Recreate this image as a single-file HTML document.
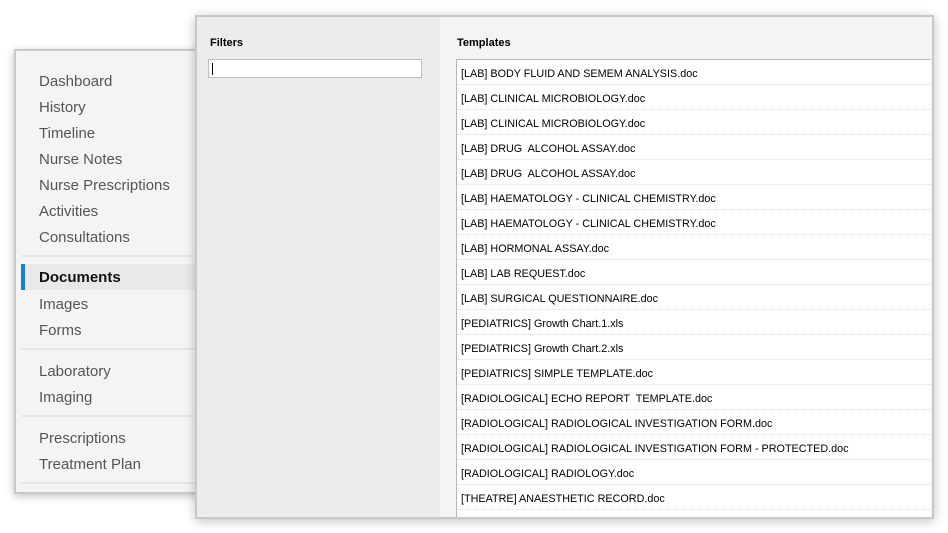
<!DOCTYPE html><html><head><style>
body{margin:0;width:948px;height:533px;background:#fff;position:relative;overflow:hidden;font-family:"Liberation Sans",Arial,sans-serif}
.back{position:absolute;left:14px;top:49px;width:200px;height:441px;background:#f4f4f4;border:2px solid #c9c9c9;box-shadow:0 2px 8px rgba(0,0,0,.25)}
.nav{position:absolute;left:39px;font-size:15px;color:#555;line-height:18px}
.sep{position:absolute;left:21px;width:180px;height:2px;background:#e6e6e6}
.win{position:absolute;left:195px;top:15px;width:735px;height:500px;background:#f4f4f4;border:2px solid #c8c8c8;box-shadow:0 2px 10px rgba(0,0,0,.25);overflow:hidden}
.lp{position:absolute;left:0;top:0;width:243px;height:500px;background:#ececec}
.lbl{position:absolute;font-size:11px;font-weight:bold;color:#000}
.inp{position:absolute;left:11px;top:42px;width:212px;height:17px;background:#fff;border:1px solid #bdbdbd}
.inp:after{content:"";position:absolute;left:3px;top:3px;width:1px;height:12px;background:#000}
.list{position:absolute;left:259px;top:42px;width:474px;height:460px;background:#fff;border:1px solid #b5b5b5;border-right:none;border-bottom:none}
.row{height:24px;border-bottom:1px dotted #ddd;font-size:10.8px;line-height:28px;padding-left:4px;color:#000;white-space:nowrap}
</style></head><body>
<div class="back"></div>
<div class="nav" style="top:73px">Dashboard</div>
<div class="nav" style="top:99px">History</div>
<div class="nav" style="top:125px">Timeline</div>
<div class="nav" style="top:151px">Nurse Notes</div>
<div class="nav" style="top:177px">Nurse Prescriptions</div>
<div class="nav" style="top:203px">Activities</div>
<div class="nav" style="top:229px">Consultations</div>
<div class="sep" style="top:255px"></div>
<div style="position:absolute;left:21px;top:264px;width:180px;height:26px;background:#e9e9e9"></div>
<div style="position:absolute;left:21px;top:264px;width:4px;height:26px;background:#1a7fd4"></div>
<div class="nav" style="top:269px;font-weight:bold;color:#111">Documents</div>
<div class="nav" style="top:296px">Images</div>
<div class="nav" style="top:322px">Forms</div>
<div class="sep" style="top:348px"></div>
<div class="nav" style="top:363px">Laboratory</div>
<div class="nav" style="top:389px">Imaging</div>
<div class="sep" style="top:415px"></div>
<div class="nav" style="top:430px">Prescriptions</div>
<div class="nav" style="top:456px">Treatment Plan</div>
<div class="sep" style="top:482px"></div>
<div class="win">
<div class="lp"></div>
<div class="lbl" style="left:13px;top:20px">Filters</div>
<div class="inp"></div>
<div class="lbl" style="left:260px;top:20px">Templates</div>
<div class="list">
<div class="row">[LAB] BODY FLUID AND SEMEM ANALYSIS.doc</div>
<div class="row">[LAB] CLINICAL MICROBIOLOGY.doc</div>
<div class="row">[LAB] CLINICAL MICROBIOLOGY.doc</div>
<div class="row">[LAB] DRUG&nbsp; ALCOHOL ASSAY.doc</div>
<div class="row">[LAB] DRUG&nbsp; ALCOHOL ASSAY.doc</div>
<div class="row">[LAB] HAEMATOLOGY - CLINICAL CHEMISTRY.doc</div>
<div class="row">[LAB] HAEMATOLOGY - CLINICAL CHEMISTRY.doc</div>
<div class="row">[LAB] HORMONAL ASSAY.doc</div>
<div class="row">[LAB] LAB REQUEST.doc</div>
<div class="row">[LAB] SURGICAL QUESTIONNAIRE.doc</div>
<div class="row">[PEDIATRICS] Growth Chart.1.xls</div>
<div class="row">[PEDIATRICS] Growth Chart.2.xls</div>
<div class="row">[PEDIATRICS] SIMPLE TEMPLATE.doc</div>
<div class="row">[RADIOLOGICAL] ECHO REPORT&nbsp; TEMPLATE.doc</div>
<div class="row">[RADIOLOGICAL] RADIOLOGICAL INVESTIGATION FORM.doc</div>
<div class="row">[RADIOLOGICAL] RADIOLOGICAL INVESTIGATION FORM - PROTECTED.doc</div>
<div class="row">[RADIOLOGICAL] RADIOLOGY.doc</div>
<div class="row">[THEATRE] ANAESTHETIC RECORD.doc</div>
</div>
</div>
</body></html>
